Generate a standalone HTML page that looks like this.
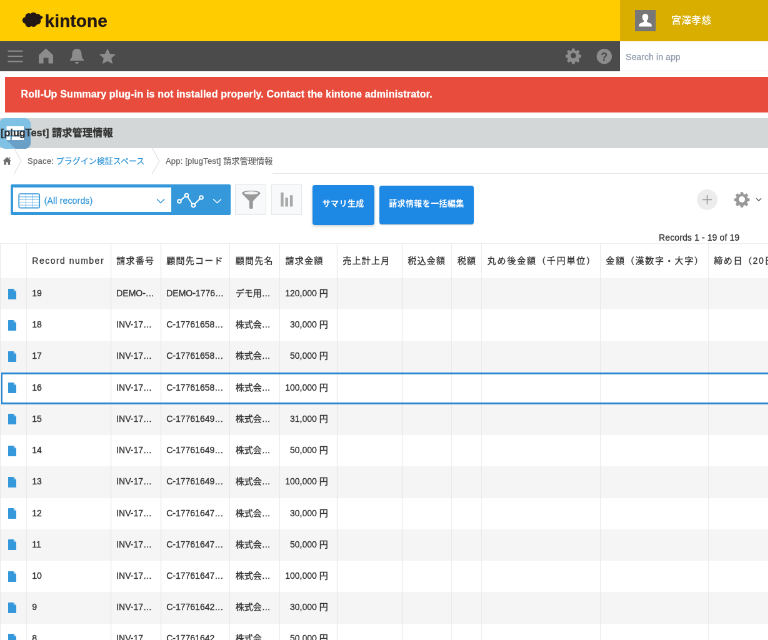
<!DOCTYPE html>
<html lang="ja"><head><meta charset="utf-8"><title>kintone</title>
<style>
*{box-sizing:border-box;margin:0;padding:0}
html,body{width:768px;height:640px;overflow:hidden;background:#fff}
body{font-family:"Liberation Sans","Noto Sans CJK JP",sans-serif;color:#333}
#root{position:absolute;left:0;top:0;width:1228.8px;height:1024px;transform:scale(.625);transform-origin:0 0;overflow:hidden;font-size:14px;will-change:transform}
.abs{position:absolute}
#hdr{left:0;top:0;width:1229px;height:66px;background:#ffcc00}
#user{left:992px;top:0;width:238px;height:66px;background:#d9ae00}
#avatar{left:1016px;top:16px;width:33px;height:33.500px;background:#777}
#uname{left:1074px;top:20.800px;font-size:16px;line-height:24px;font-weight:500;color:#fff;white-space:nowrap}
#logo{left:71.6px;top:18.2px;-webkit-text-stroke:.4px #231815;font-weight:bold;font-size:28px;line-height:32px;color:#231815;letter-spacing:.1px;white-space:nowrap}
#bar{left:0;top:65.700px;width:992px;height:48.800px;background:#4b4b4b;border-top:1px solid #3a4258}
#search{left:992px;top:65.700px;width:238px;height:48.800px;background:#fff;border-bottom:1px solid #e3e7e8}
#search span{-webkit-text-stroke:.25px;position:absolute;left:9px;top:15px;letter-spacing:.1px;font-size:14px;line-height:20px;color:#8e9aab;white-space:nowrap}
#notice{left:8px;top:123px;width:1221px;height:56.5px;background:#e74c3c}
#notice span{-webkit-text-stroke:.3px;position:absolute;left:25.5px;top:17.3px;letter-spacing:.166px;font-size:16px;line-height:22px;font-weight:bold;color:#fff;white-space:nowrap}
#titlebar{left:0;top:188.5px;width:1229px;height:48.700px;background:#d4d7d7}
#appicon{left:-1px;top:188.5px;width:50px;height:49px;border-radius:9px;background:#80c1e6;overflow:hidden}
#title{-webkit-text-stroke:.3px;left:1px;top:200px;font-size:16.3px;line-height:24px;font-weight:bold;color:#333;white-space:nowrap}
#crumb{left:0;top:237px;width:1229px;height:42px;-webkit-text-stroke:.25px;font-size:13px;color:#666;white-space:nowrap}
#crumb span{position:absolute;top:12.3px;line-height:18px}
#crumbline{left:436px;top:276.5px;width:800px;height:1px;background:#e3e7e8}
.th,.td{position:absolute;white-space:nowrap;overflow:hidden}
.th{font-size:14px;letter-spacing:1.25px;color:#333;line-height:20px;-webkit-text-stroke:.3px #333}
.td{font-size:14px;color:#333;line-height:20px;-webkit-text-stroke:.35px #333}
.vl{position:absolute;width:1px;background:#e3e7e8}
.hl{position:absolute;height:1px;background:#e3e7e8}
.rowbg{position:absolute;left:0;width:1229px;height:50.23px;background:#f5f5f5}
.btn{position:absolute;background:#1e88e5;color:#fff;font-weight:bold;font-size:13px;border-radius:4px;text-align:center;white-space:nowrap;box-shadow:0 2px 4px rgba(0,0,0,.2)}
</style></head><body><div id="root">

<div id="hdr" class="abs"></div><div id="user" class="abs"></div>
<div id="avatar" class="abs"><svg width="33" height="33" viewBox="0 0 33 33"><path fill="#fff" d="M16.5 6c3 0 4.8 2.2 4.8 5.2 0 2.4-.9 4.6-2.3 5.6v1.6c0 .9 5.6 2.2 7 4 .7 1 .9 2.6 .9 4.100H6.100c0-1.500.2-3.100.9-4.100 1.400-1.800 7-3.100 7-4v-1.600c-1.400-1-2.300-3.200-2.300-5.600 0-3 1.800-5.200 4.800-5.200z"/></svg></div>
<div id="uname" class="abs">宮澤孝慈</div>
<svg class="abs" style="left:30px;top:15px" width="45" height="35" viewBox="30 15 45 35"><g fill="#231815"><circle cx="46" cy="26.500" r="5.600"/><circle cx="53.500" cy="25.300" r="5.600"/><circle cx="60" cy="27.500" r="5.400"/><circle cx="41" cy="32.500" r="5.200"/><circle cx="46" cy="37.800" r="5.600"/><circle cx="53.500" cy="37" r="6"/><circle cx="59.800" cy="33.800" r="5.400"/><circle cx="51" cy="31.500" r="9"/><path d="M61 23.500l8.500 3.800-6 5.500z"/></g></svg>
<div id="logo" class="abs">kintone</div>
<div id="bar" class="abs"></div><div id="search" class="abs"><span>Search in app</span></div>
<svg class="abs" style="left:0;top:65.5px" width="991" height="48" viewBox="0 0 991 48"><g fill="#8c8c8c"><rect x="12.500" y="14.600" width="24" height="2.200"/><rect x="12.500" y="22.900" width="24" height="2.200"/><rect x="12.500" y="31.200" width="24" height="2.200"/><path d="M73.500 13l11.500 10.500V37h-7.500v-9h-8v9H62V23.500z" transform="translate(0,-1.400)"/><path transform="translate(0,-.6)" d="M123 12.500c4.500 0 7.500 3.500 7.500 8 0 5 1.200 8 3.500 9.500v1.500h-22v-1.500c2.300-1.500 3.500-4.500 3.500-9.500 0-4.500 3-8 7.500-8zM120 33.500h6c0 1.700-1.300 3-3 3s-3-1.300-3-3z"/><path transform="translate(172,24.500) scale(1.050) translate(-172,-24.500)" d="M172 12l3.700 8.200 8.800.9-6.600 6 1.900 8.700-7.800-4.500-7.800 4.500 1.900-8.700-6.600-6 8.800-.9z"/><g transform="translate(917.300,22.900) scale(1.04)"><path fill-rule="evenodd" d="M-2-11h4l.6 3.100 1.900.8 2.600-1.800 2.800 2.800-1.800 2.600.8 1.900 3.100.6v4l-3.100.6-.8 1.900 1.800 2.600-2.800 2.800-2.600-1.800-1.900.8-.6 3.100h-4l-.6-3.100-1.900-.8-2.600 1.800-2.800-2.800 1.800-2.600-.8-1.900-3.100-.6v-4l3.100-.6.8-1.900-1.800-2.600 2.800-2.800 2.600 1.800 1.900-.8zM0-4.200a4.200 4.200 0 1 0 0 8.400 4.200 4.200 0 0 0 0-8.400z"/></g><circle cx="966.800" cy="24.200" r="12.200"/></g><text x="966.800" y="30.700" font-family="Liberation Sans, sans-serif" font-weight="bold" font-size="18" fill="#4b4b4b" text-anchor="middle">?</text></svg>
<div id="notice" class="abs"><span>Roll-Up Summary plug-in is not installed properly. Contact the kintone administrator.</span></div>
<div id="titlebar" class="abs"></div>
<div id="appicon" class="abs"><svg width="50" height="49" viewBox="-1 0 50 49"><path fill="#6a9fc8" d="M10.500 35L38 13 49 24V49H24.500z"/><g fill="#fff"><rect x="10.500" y="13" width="27.500" height="6"/><rect x="10.500" y="21.500" width="6" height="5.500"/><rect x="19" y="21.500" width="19" height="5.500"/><rect x="10.500" y="29.500" width="6" height="5.500"/><rect x="19" y="29.500" width="19" height="5.500"/></g></svg></div>
<div id="title" class="abs">[plugTest] 請求管理情報</div>
<div id="crumb" class="abs"><svg class="abs" style="left:3.500px;top:13px" width="14.500" height="15" viewBox="0 0 14 14"><path fill="#6e6e6e" d="M7 1l6.500 6h-1.800v6h-3.200v-4h-3v4H2.300V7H.5zM10 1.500h1.800v2.500l-1.800-1.600z"/></svg><svg class="abs" style="left:21px;top:0" width="16" height="42" viewBox="0 0 16 42"><path fill="none" stroke="#dfe3e4" stroke-width="1.300" d="M1 -1l12 21.600L1 42"/></svg><span style="left:44px"><span style="position:static;letter-spacing:.25px">Space: </span><span style="position:static;color:#3498db">プラグイン検証スペース</span></span><svg class="abs" style="left:242px;top:0" width="16" height="42" viewBox="0 0 16 42"><path fill="none" stroke="#dfe3e4" stroke-width="1.300" d="M1 -1l12 21.600L1 42"/></svg><span style="left:265px;letter-spacing:.17px">App: [plugTest] 請求管理情報</span></div><div id="crumbline" class="abs"></div>
<div class="abs" style="left:17px;top:295px;width:352px;height:48.500px;background:#3498db;border-radius:2px"></div>
<div class="abs" style="left:21px;top:300px;width:253px;height:38.800px;background:#fff"></div>
<svg class="abs" style="left:29px;top:308.500px" width="36" height="25" viewBox="0 0 36 25"><rect x="1.200" y="1.200" width="33" height="22.400" rx="2.200" fill="#fff" stroke="#3498db" stroke-width="1.700"/><g stroke="#3498db" fill="none"><path stroke-width="1.100" d="M1 6h34" opacity=".9"/><path stroke-width=".9" d="M1 10.400h34M1 14.800h34M1 19.200h34M12.300 1v22.500M23.500 1v22.500" opacity=".65"/></g></svg>
<div class="abs" style="left:70.700px;top:310.800px;font-size:14px;letter-spacing:.17px;-webkit-text-stroke:.3px;line-height:20px;color:#3498db;white-space:nowrap">(All records)</div>
<svg class="abs" style="left:250px;top:317px" width="14" height="9" viewBox="0 0 14 9"><path fill="none" stroke="#3498db" stroke-width="1.500" d="M1 1.500l6 6 6-6"/></svg>
<svg class="abs" style="left:280px;top:305px" width="50" height="30" viewBox="0 0 50 30"><g fill="none" stroke="#fff" stroke-width="2"><path d="M9 15.500l7.500-6.500M20.300 10.200l7.500 11.500M31.200 21.500l8.800-8.500"/><circle cx="7" cy="17" r="2.800"/><circle cx="18.500" cy="7.500" r="2.800"/><circle cx="29.400" cy="23.600" r="2.800"/><circle cx="42" cy="11" r="2.800"/></g></svg>
<svg class="abs" style="left:340px;top:317px" width="15" height="9" viewBox="0 0 15 9"><path fill="none" stroke="#fff" stroke-width="1.500" d="M1 1.500l6.500 6 6.500-6"/></svg>
<div class="abs" style="left:376px;top:295px;width:50px;height:48.500px;background:#f7f9fa;border:1px solid #e3e7e8"></div>
<svg class="abs" style="left:387px;top:304.600px" width="30" height="30" viewBox="0 0 30 30"><path fill="#999" d="M.3 3.900C.3 1.600 6 0 14.800 0S29.300 1.600 29.300 3.900c0 .8-.5 1.500-1.300 2.300L17.700 16.800V27.400a2.900 1.500 0 0 1-5.800 0V16.800L1.600 6.200C.8 5.400.3 4.700.3 3.900z"/><ellipse cx="14.800" cy="3.800" rx="11.300" ry="2.500" fill="#f4f4f4"/></svg>
<div class="abs" style="left:434px;top:295px;width:49px;height:48.500px;background:#f7f9fa;border:1px solid #e3e7e8"></div>
<svg class="abs" style="left:448px;top:307px" width="22" height="26" viewBox="0 0 22 26"><g fill="#a9a9a9"><rect x="1.100" y="1" width="4.500" height="22.500"/><rect x="8.400" y="9.300" width="4.500" height="14.200"/><rect x="15.900" y="5.200" width="4.500" height="18.300"/></g></svg>
<div class="btn" style="left:499.500px;top:295.500px;width:99px;height:64px;line-height:60.300px;letter-spacing:.4px;text-indent:.4px">サマリ生成</div>
<div class="btn" style="left:607px;top:296.500px;width:150.500px;height:62px;line-height:58.400px;letter-spacing:.4px;text-indent:.4px;box-shadow:0 1px 2px rgba(0,0,0,.2)">請求情報を一括編集</div>
<div class="abs" style="left:1114.500px;top:302.500px;width:33px;height:33px;border-radius:50%;background:#ececec"></div>
<svg class="abs" style="left:1114.500px;top:302.500px" width="33" height="33" viewBox="0 0 33 33"><path stroke="#999" stroke-width="1.600" d="M16.500 9v15M9 16.500h15"/></svg>
<svg class="abs" style="left:1173.500px;top:306px" width="26" height="26" viewBox="-14.300 -14.300 28.600 28.600"><path fill="#999" fill-rule="evenodd" d="M-2.200-13h4.400l.7 3.600 2.200.9 3-2.100 3.200 3.200-2.100 3 .9 2.200 3.600.7v4.400l-3.600.7-.9 2.200 2.100 3-3.200 3.200-3-2.100-2.200.9-.7 3.600h-4.400l-.7-3.600-2.200-.9-3 2.100-3.200-3.200 2.100-3-.9-2.200-3.600-.7v-4.400l3.600-.7.9-2.200-2.100-3 3.200-3.200 3 2.100 2.200-.9zM0-5.500a5.500 5.500 0 1 0 0 11 5.500 5.500 0 0 0 0-11z"/></svg>
<svg class="abs" style="left:1208.500px;top:316px" width="10" height="7" viewBox="0 0 10 7"><path fill="none" stroke="#666" stroke-width="1.600" d="M1 1.200l4 4 4-4"/></svg>
<div class="abs" style="left:1054px;top:369.800px;font-size:14px;letter-spacing:.12px;-webkit-text-stroke:.3px;line-height:20px;color:#333;white-space:nowrap">Records 1 - 19 of 19</div>
<div class="hl" style="left:0;top:389.3px;width:1229px"></div>
<div class="rowbg" style="top:445.0px"></div>
<div class="rowbg" style="top:545.46px"></div>
<div class="rowbg" style="top:645.92px"></div>
<div class="rowbg" style="top:746.38px"></div>
<div class="rowbg" style="top:846.8399999999999px"></div>
<div class="rowbg" style="top:947.3px"></div>
<div class="vl" style="left:0px;top:389.3px;height:700px"></div>
<div class="vl" style="left:41.8px;top:389.3px;height:700px"></div>
<div class="vl" style="left:176.7px;top:389.3px;height:700px"></div>
<div class="vl" style="left:256.7px;top:389.3px;height:700px"></div>
<div class="vl" style="left:367.2px;top:389.3px;height:700px"></div>
<div class="vl" style="left:447.1px;top:389.3px;height:700px"></div>
<div class="vl" style="left:538.7px;top:389.3px;height:700px"></div>
<div class="vl" style="left:642.7px;top:389.3px;height:700px"></div>
<div class="vl" style="left:722.2px;top:389.3px;height:700px"></div>
<div class="vl" style="left:770.2px;top:389.3px;height:700px"></div>
<div class="vl" style="left:959.7px;top:389.3px;height:700px"></div>
<div class="vl" style="left:1132.7px;top:389.3px;height:700px"></div>
<div class="th" style="left:51.3px;top:407.2px;width:124.89999999999998px;letter-spacing:1.480px">Record number</div>
<div class="th" style="left:186.2px;top:407.2px;width:70.0px">請求番号</div>
<div class="th" style="left:266.2px;top:407.2px;width:100.5px">顧問先コード</div>
<div class="th" style="left:376.7px;top:407.2px;width:69.90000000000003px">顧問先名</div>
<div class="th" style="left:456.6px;top:407.2px;width:81.60000000000002px">請求金額</div>
<div class="th" style="left:548.2px;top:407.2px;width:94.0px">売上計上月</div>
<div class="th" style="left:652.2px;top:407.2px;width:69.5px">税込金額</div>
<div class="th" style="left:731.7px;top:407.2px;width:38.0px">税額</div>
<div class="th" style="left:779.7px;top:407.2px;width:179.5px;letter-spacing:1.850px">丸め後金額（千円単位）</div>
<div class="th" style="left:969.2px;top:407.2px;width:163.0px;letter-spacing:1.750px">金額（漢数字・大字）</div>
<div class="th" style="left:1142.2px;top:407.2px;width:157.29999999999995px;letter-spacing:1.600px">締め日（20日）</div>
<div class="abs" style="left:12.900px;top:461.5px"><svg width="13" height="17" viewBox="0 0 13 17" style="display:block"><path fill="#3498db" d="M.8 0h7.700L13 4.500V16.200a.8.800 0 0 1-.8.800H.8a.8.800 0 0 1-.8-.8V.8A.8.800 0 0 1 .8 0z"/><path fill="#8cc6ef" d="M8.800 0v3.300a.9.900 0 0 0 .9.900H13z"/></svg></div>
<div class="td" style="left:51.3px;top:458.9px;width:124.89999999999998px">19</div>
<div class="td" style="left:186.2px;top:458.9px;width:70.0px">DEMO-…</div>
<div class="td" style="left:266.2px;top:458.9px;width:100.5px">DEMO-1776…</div>
<div class="td" style="left:376.7px;top:458.9px;width:69.90000000000003px">デモ用…</div>
<div class="td" style="left:447.1px;top:458.9px;width:77.60000000000002px;text-align:right">120,000 円</div>
<div class="abs" style="left:12.900px;top:511.73px"><svg width="13" height="17" viewBox="0 0 13 17" style="display:block"><path fill="#3498db" d="M.8 0h7.700L13 4.500V16.200a.8.800 0 0 1-.8.800H.8a.8.800 0 0 1-.8-.8V.8A.8.800 0 0 1 .8 0z"/><path fill="#8cc6ef" d="M8.800 0v3.300a.9.900 0 0 0 .9.900H13z"/></svg></div>
<div class="td" style="left:51.3px;top:509.13px;width:124.89999999999998px">18</div>
<div class="td" style="left:186.2px;top:509.13px;width:70.0px">INV-17…</div>
<div class="td" style="left:266.2px;top:509.13px;width:100.5px">C-17761658…</div>
<div class="td" style="left:376.7px;top:509.13px;width:69.90000000000003px">株式会…</div>
<div class="td" style="left:447.1px;top:509.13px;width:77.60000000000002px;text-align:right">30,000 円</div>
<div class="abs" style="left:12.900px;top:561.96px"><svg width="13" height="17" viewBox="0 0 13 17" style="display:block"><path fill="#3498db" d="M.8 0h7.700L13 4.500V16.200a.8.800 0 0 1-.8.800H.8a.8.800 0 0 1-.8-.8V.8A.8.800 0 0 1 .8 0z"/><path fill="#8cc6ef" d="M8.800 0v3.300a.9.900 0 0 0 .9.900H13z"/></svg></div>
<div class="td" style="left:51.3px;top:559.36px;width:124.89999999999998px">17</div>
<div class="td" style="left:186.2px;top:559.36px;width:70.0px">INV-17…</div>
<div class="td" style="left:266.2px;top:559.36px;width:100.5px">C-17761658…</div>
<div class="td" style="left:376.7px;top:559.36px;width:69.90000000000003px">株式会…</div>
<div class="td" style="left:447.1px;top:559.36px;width:77.60000000000002px;text-align:right">50,000 円</div>
<div class="abs" style="left:12.900px;top:612.19px"><svg width="13" height="17" viewBox="0 0 13 17" style="display:block"><path fill="#3498db" d="M.8 0h7.700L13 4.500V16.200a.8.800 0 0 1-.8.800H.8a.8.800 0 0 1-.8-.8V.8A.8.800 0 0 1 .8 0z"/><path fill="#8cc6ef" d="M8.800 0v3.300a.9.900 0 0 0 .9.900H13z"/></svg></div>
<div class="td" style="left:51.3px;top:609.59px;width:124.89999999999998px">16</div>
<div class="td" style="left:186.2px;top:609.59px;width:70.0px">INV-17…</div>
<div class="td" style="left:266.2px;top:609.59px;width:100.5px">C-17761658…</div>
<div class="td" style="left:376.7px;top:609.59px;width:69.90000000000003px">株式会…</div>
<div class="td" style="left:447.1px;top:609.59px;width:77.60000000000002px;text-align:right">100,000 円</div>
<div class="abs" style="left:12.900px;top:662.42px"><svg width="13" height="17" viewBox="0 0 13 17" style="display:block"><path fill="#3498db" d="M.8 0h7.700L13 4.500V16.200a.8.800 0 0 1-.8.800H.8a.8.800 0 0 1-.8-.8V.8A.8.800 0 0 1 .8 0z"/><path fill="#8cc6ef" d="M8.800 0v3.300a.9.900 0 0 0 .9.900H13z"/></svg></div>
<div class="td" style="left:51.3px;top:659.8199999999999px;width:124.89999999999998px">15</div>
<div class="td" style="left:186.2px;top:659.8199999999999px;width:70.0px">INV-17…</div>
<div class="td" style="left:266.2px;top:659.8199999999999px;width:100.5px">C-17761649…</div>
<div class="td" style="left:376.7px;top:659.8199999999999px;width:69.90000000000003px">株式会…</div>
<div class="td" style="left:447.1px;top:659.8199999999999px;width:77.60000000000002px;text-align:right">31,000 円</div>
<div class="abs" style="left:12.900px;top:712.65px"><svg width="13" height="17" viewBox="0 0 13 17" style="display:block"><path fill="#3498db" d="M.8 0h7.700L13 4.500V16.200a.8.800 0 0 1-.8.800H.8a.8.800 0 0 1-.8-.8V.8A.8.800 0 0 1 .8 0z"/><path fill="#8cc6ef" d="M8.800 0v3.300a.9.900 0 0 0 .9.900H13z"/></svg></div>
<div class="td" style="left:51.3px;top:710.05px;width:124.89999999999998px">14</div>
<div class="td" style="left:186.2px;top:710.05px;width:70.0px">INV-17…</div>
<div class="td" style="left:266.2px;top:710.05px;width:100.5px">C-17761649…</div>
<div class="td" style="left:376.7px;top:710.05px;width:69.90000000000003px">株式会…</div>
<div class="td" style="left:447.1px;top:710.05px;width:77.60000000000002px;text-align:right">50,000 円</div>
<div class="abs" style="left:12.900px;top:762.88px"><svg width="13" height="17" viewBox="0 0 13 17" style="display:block"><path fill="#3498db" d="M.8 0h7.700L13 4.500V16.200a.8.800 0 0 1-.8.800H.8a.8.800 0 0 1-.8-.8V.8A.8.800 0 0 1 .8 0z"/><path fill="#8cc6ef" d="M8.800 0v3.300a.9.900 0 0 0 .9.900H13z"/></svg></div>
<div class="td" style="left:51.3px;top:760.28px;width:124.89999999999998px">13</div>
<div class="td" style="left:186.2px;top:760.28px;width:70.0px">INV-17…</div>
<div class="td" style="left:266.2px;top:760.28px;width:100.5px">C-17761649…</div>
<div class="td" style="left:376.7px;top:760.28px;width:69.90000000000003px">株式会…</div>
<div class="td" style="left:447.1px;top:760.28px;width:77.60000000000002px;text-align:right">100,000 円</div>
<div class="abs" style="left:12.900px;top:813.1099999999999px"><svg width="13" height="17" viewBox="0 0 13 17" style="display:block"><path fill="#3498db" d="M.8 0h7.700L13 4.500V16.200a.8.800 0 0 1-.8.800H.8a.8.800 0 0 1-.8-.8V.8A.8.800 0 0 1 .8 0z"/><path fill="#8cc6ef" d="M8.800 0v3.300a.9.900 0 0 0 .9.900H13z"/></svg></div>
<div class="td" style="left:51.3px;top:810.5099999999999px;width:124.89999999999998px">12</div>
<div class="td" style="left:186.2px;top:810.5099999999999px;width:70.0px">INV-17…</div>
<div class="td" style="left:266.2px;top:810.5099999999999px;width:100.5px">C-17761647…</div>
<div class="td" style="left:376.7px;top:810.5099999999999px;width:69.90000000000003px">株式会…</div>
<div class="td" style="left:447.1px;top:810.5099999999999px;width:77.60000000000002px;text-align:right">30,000 円</div>
<div class="abs" style="left:12.900px;top:863.3399999999999px"><svg width="13" height="17" viewBox="0 0 13 17" style="display:block"><path fill="#3498db" d="M.8 0h7.700L13 4.500V16.200a.8.800 0 0 1-.8.800H.8a.8.800 0 0 1-.8-.8V.8A.8.800 0 0 1 .8 0z"/><path fill="#8cc6ef" d="M8.800 0v3.300a.9.900 0 0 0 .9.900H13z"/></svg></div>
<div class="td" style="left:51.3px;top:860.7399999999999px;width:124.89999999999998px">11</div>
<div class="td" style="left:186.2px;top:860.7399999999999px;width:70.0px">INV-17…</div>
<div class="td" style="left:266.2px;top:860.7399999999999px;width:100.5px">C-17761647…</div>
<div class="td" style="left:376.7px;top:860.7399999999999px;width:69.90000000000003px">株式会…</div>
<div class="td" style="left:447.1px;top:860.7399999999999px;width:77.60000000000002px;text-align:right">50,000 円</div>
<div class="abs" style="left:12.900px;top:913.5699999999999px"><svg width="13" height="17" viewBox="0 0 13 17" style="display:block"><path fill="#3498db" d="M.8 0h7.700L13 4.500V16.200a.8.800 0 0 1-.8.800H.8a.8.800 0 0 1-.8-.8V.8A.8.800 0 0 1 .8 0z"/><path fill="#8cc6ef" d="M8.800 0v3.300a.9.900 0 0 0 .9.900H13z"/></svg></div>
<div class="td" style="left:51.3px;top:910.9699999999999px;width:124.89999999999998px">10</div>
<div class="td" style="left:186.2px;top:910.9699999999999px;width:70.0px">INV-17…</div>
<div class="td" style="left:266.2px;top:910.9699999999999px;width:100.5px">C-17761647…</div>
<div class="td" style="left:376.7px;top:910.9699999999999px;width:69.90000000000003px">株式会…</div>
<div class="td" style="left:447.1px;top:910.9699999999999px;width:77.60000000000002px;text-align:right">100,000 円</div>
<div class="abs" style="left:12.900px;top:963.8px"><svg width="13" height="17" viewBox="0 0 13 17" style="display:block"><path fill="#3498db" d="M.8 0h7.700L13 4.500V16.200a.8.800 0 0 1-.8.800H.8a.8.800 0 0 1-.8-.8V.8A.8.800 0 0 1 .8 0z"/><path fill="#8cc6ef" d="M8.800 0v3.300a.9.900 0 0 0 .9.900H13z"/></svg></div>
<div class="td" style="left:51.3px;top:961.1999999999999px;width:124.89999999999998px">9</div>
<div class="td" style="left:186.2px;top:961.1999999999999px;width:70.0px">INV-17…</div>
<div class="td" style="left:266.2px;top:961.1999999999999px;width:100.5px">C-17761642…</div>
<div class="td" style="left:376.7px;top:961.1999999999999px;width:69.90000000000003px">株式会…</div>
<div class="td" style="left:447.1px;top:961.1999999999999px;width:77.60000000000002px;text-align:right">30,000 円</div>
<div class="abs" style="left:12.900px;top:1014.03px"><svg width="13" height="17" viewBox="0 0 13 17" style="display:block"><path fill="#3498db" d="M.8 0h7.700L13 4.500V16.200a.8.800 0 0 1-.8.800H.8a.8.800 0 0 1-.8-.8V.8A.8.800 0 0 1 .8 0z"/><path fill="#8cc6ef" d="M8.800 0v3.300a.9.900 0 0 0 .9.900H13z"/></svg></div>
<div class="td" style="left:51.3px;top:1011.43px;width:124.89999999999998px">8</div>
<div class="td" style="left:186.2px;top:1011.43px;width:70.0px">INV-17…</div>
<div class="td" style="left:266.2px;top:1011.43px;width:100.5px">C-17761642…</div>
<div class="td" style="left:376.7px;top:1011.43px;width:69.90000000000003px">株式会…</div>
<div class="td" style="left:447.1px;top:1011.43px;width:77.60000000000002px;text-align:right">50,000 円</div>
<div class="abs" style="left:1px;top:595.69px;width:1240px;height:51.629999999999995px;border:3.200px solid #2e88d0;border-right:none;background:transparent"></div>
</div></body></html>
